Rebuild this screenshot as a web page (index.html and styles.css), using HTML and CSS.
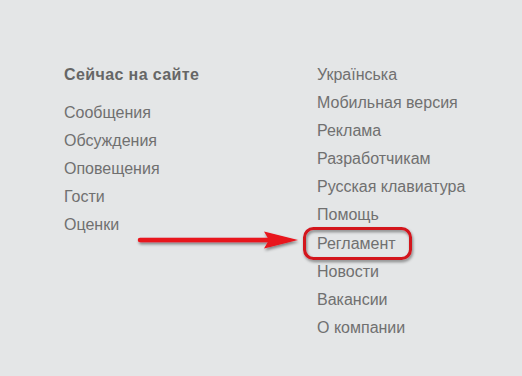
FILE: index.html
```html
<!DOCTYPE html>
<html lang="ru">
<head>
  <meta charset="UTF-8">
  <title>Сейчас на сайте</title>
  <link rel="stylesheet" href="styles.css">
</head>
<body>
  <div class="footer">
    <div class="col col-left">
      <div class="col-title">Сейчас на сайте</div>
      <a class="link" href="#">Сообщения</a>
      <a class="link" href="#">Обсуждения</a>
      <a class="link" href="#">Оповещения</a>
      <a class="link" href="#">Гости</a>
      <a class="link" href="#">Оценки</a>
    </div>
    <div class="col col-right">
      <a class="link" href="#">Українська</a>
      <a class="link" href="#">Мобильная версия</a>
      <a class="link" href="#">Реклама</a>
      <a class="link" href="#">Разработчикам</a>
      <a class="link" href="#">Русская клавиатура</a>
      <a class="link" href="#">Помощь</a>
      <a class="link" href="#">Регламент</a>
      <a class="link" href="#">Новости</a>
      <a class="link" href="#">Вакансии</a>
      <a class="link" href="#">О компании</a>
    </div>
  </div>

  <!-- annotation drawn over the page -->
  <svg class="annotation" width="522" height="376" viewBox="0 0 522 376">
    <defs>
      <filter id="shadow" x="-10%" y="-50%" width="120%" height="200%">
        <feDropShadow dx="1" dy="2" stdDeviation="1.5" flood-color="#000" flood-opacity="0.45"/>
      </filter>
    </defs>
    <g filter="url(#shadow)">
      <line x1="140" y1="240" x2="272" y2="240" stroke="#e8141c" stroke-width="4.5" stroke-linecap="round"/>
      <path d="M264 231.5 L298 240 L264 248.5 L269 240 Z" fill="#e8141c"/>
      <rect x="304.5" y="228.5" width="106" height="30" rx="9" fill="none" stroke="#d3121c" stroke-width="3"/>
    </g>
  </svg>
</body>
</html>
```

FILE: styles.css
```css
body {
  margin: 0;
  background-color: #e4e6e7;
  font-family: Arial, "Liberation Sans", sans-serif;
  font-size: 16px;
  height: 376px;
  overflow: hidden;
}

.footer {
  display: flex;
  padding: 61px 0 0 64px;
}

.col {
  display: flex;
  flex-direction: column;
}

.col-left {
  width: 253px;
}

.col-title {
  font-weight: bold;
  color: #666;
  letter-spacing: 0.4px;
  line-height: 28px;
  margin-bottom: 10px;
}

.link {
  color: #707070;
  text-decoration: none;
  line-height: 28.1px;
}

.annotation {
  position: absolute;
  top: 0;
  left: 0;
  pointer-events: none;
}
```
